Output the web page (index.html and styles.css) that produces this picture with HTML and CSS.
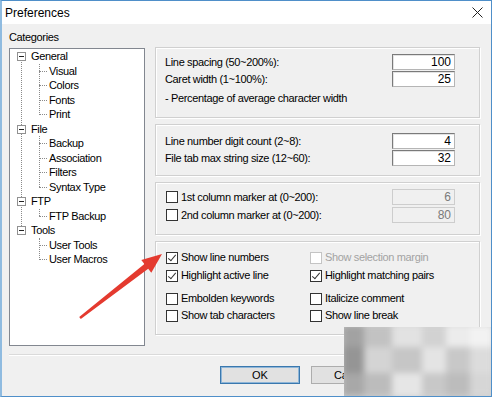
FILE: index.html
```html
<!DOCTYPE html>
<html>
<head>
    <title>Preferences</title>
    <link rel="stylesheet" href="styles.css">
</head>
<body>
    <div class="window">
        <div class="titlebar">
            <span class="title">Preferences</span>
            <svg class="close" width="11" height="11" viewBox="0 0 11 11">
                <path d="M0.5 0.5 L10.5 10.5 M10.5 0.5 L0.5 10.5" stroke="#222" stroke-width="1"/>
            </svg>
        </div>

        <div class="main">
            <div class="left">
                <div class="cat-label">Categories</div>
                <div class="tree-box">
                    <ul class="tree">
                        <li class="node">
                            <div class="row"><span class="exp"></span>General</div>
                            <ul class="kids">
                                <li><div class="row">Visual</div></li>
                                <li><div class="row">Colors</div></li>
                                <li><div class="row">Fonts</div></li>
                                <li><div class="row">Print</div></li>
                            </ul>
                        </li>
                        <li class="node">
                            <div class="row"><span class="exp"></span>File</div>
                            <ul class="kids">
                                <li><div class="row">Backup</div></li>
                                <li><div class="row">Association</div></li>
                                <li><div class="row">Filters</div></li>
                                <li><div class="row">Syntax Type</div></li>
                            </ul>
                        </li>
                        <li class="node">
                            <div class="row"><span class="exp"></span>FTP</div>
                            <ul class="kids">
                                <li><div class="row">FTP Backup</div></li>
                            </ul>
                        </li>
                        <li class="node last">
                            <div class="row"><span class="exp"></span>Tools</div>
                            <ul class="kids">
                                <li><div class="row">User Tools</div></li>
                                <li><div class="row">User Macros</div></li>
                            </ul>
                        </li>
                    </ul>
                </div>
            </div>

            <div class="right">
                <div class="group g1">
                    <div class="field"><span>Line spacing (50~200%):</span><span class="num">100</span></div>
                    <div class="field"><span>Caret width (1~100%):</span><span class="num">25</span></div>
                    <div class="note">- Percentage of average character width</div>
                </div>

                <div class="group g2">
                    <div class="field"><span>Line number digit count (2~8):</span><span class="num">4</span></div>
                    <div class="field"><span>File tab max string size (12~60):</span><span class="num">32</span></div>
                </div>

                <div class="group g3">
                    <div class="field"><span class="cb"></span><span class="cb-text">1st column marker at (0~200):</span><span class="num off">6</span></div>
                    <div class="field"><span class="cb"></span><span class="cb-text">2nd column marker at (0~200):</span><span class="num off">80</span></div>
                </div>

                <div class="group g4">
                    <div class="checks">
                        <label class="chk"><span class="cb on"></span>Show line numbers</label>
                        <label class="chk off"><span class="cb"></span>Show selection margin</label>
                        <label class="chk"><span class="cb on"></span>Highlight active line</label>
                        <label class="chk"><span class="cb on"></span>Highlight matching pairs</label>
                    </div>
                    <div class="checks second">
                        <label class="chk"><span class="cb"></span>Embolden keywords</label>
                        <label class="chk"><span class="cb"></span>Italicize comment</label>
                        <label class="chk"><span class="cb"></span>Show tab characters</label>
                        <label class="chk"><span class="cb"></span>Show line break</label>
                    </div>
                </div>
            </div>
        </div>

        <div class="footer">
            <button class="btn default">OK</button>
            <button class="btn">Cancel</button>
        </div>

        <!-- red pointer drawn on top of the dialog -->
        <svg class="arrow" width="492" height="397" viewBox="0 0 492 397">
            <polygon points="162,254 151.3,272.7 148.2,268.8 80.8,319 79.2,317 144.4,264 141.3,260.1" fill="#e43a2f"/>
        </svg>

        <!-- blurred watermark in the corner -->
        <div class="mosaic">
            <div class="blur">
                <span style="background:#a2a2a2"></span><span style="background:#c2c2c2"></span><span style="background:#e2e2e2"></span><span style="background:#d2d2d2"></span><span style="background:#ececec"></span><span style="background:#f2f2f2"></span>
                <span style="background:#959595"></span><span style="background:#d4d4d4"></span><span style="background:#c6c6c6"></span><span style="background:#e4e4e4"></span><span style="background:#c8c8c8"></span><span style="background:#dcdcdc"></span>
                <span style="background:#a8a8a8"></span><span style="background:#bcbcbc"></span><span style="background:#e6e6e6"></span><span style="background:#c8c8c8"></span><span style="background:#bcbcbc"></span><span style="background:#d6d6d6"></span>
            </div>
        </div>
    </div>
</body>
</html>
```

FILE: styles.css
```css
* { box-sizing: border-box; }
body { margin: 0; background: #f0f0f0; font-family: "Liberation Sans", Arial, sans-serif; font-size: 11px; letter-spacing: -0.35px; color: #000; }

.window { position: relative; width: 492px; height: 397px; background: #f0f0f0; border: 1px solid #4f8fc9; border-left: 2px solid #8fbbe0; overflow: hidden; }

.titlebar { height: 23px; background: #fff; display: flex; align-items: center; justify-content: space-between; padding: 0 8px 0 3px; }
.title { font-size: 12px; letter-spacing: 0; color: #000; }
.close { display: block; }

.main { display: flex; gap: 10px; padding-left: 7px; }
.left { width: 136px; }
.cat-label { margin-top: 7px; line-height: 12px; margin-bottom: 5px; }
.tree-box { height: 298px; background: #fff; border: 1px solid #828790; }

/* tree */
.tree, .kids { list-style: none; margin: 0; padding: 0; }
.tree .row { height: 14.5px; line-height: 14.5px; white-space: nowrap; }
.node { position: relative; }
.node > .row { position: relative; padding-left: 21px; }
.node::before { content: ""; position: absolute; left: 11px; top: 7px; bottom: -7px; border-left: 1px dotted #8a8a8a; }
.node.last::before { display: none; }
.exp { position: absolute; left: 7px; top: 3px; width: 9px; height: 9px; border: 1px solid #919191; background: #fff; z-index: 1; }
.exp::after { content: ""; position: absolute; left: 1px; top: 3px; width: 5px; height: 1px; background: #222; }
.kids { position: relative; }
.kids::before { content: ""; position: absolute; left: 29px; top: 0; bottom: 7px; border-left: 1px dotted #8a8a8a; }
.kids li { position: relative; }
.kids .row { padding-left: 39px; }
.kids li::before { content: ""; position: absolute; left: 29px; top: 7px; width: 8px; border-top: 1px dotted #8a8a8a; }

/* right side groups */
.right { width: 325px; padding-top: 23px; display: flex; flex-direction: column; gap: 6px; }
.group { border: 1px solid #d0d0d0; box-shadow: inset 1px 1px 0 #fff, 1px 1px 0 #fff; }
.g1 { height: 71px; padding-top: 6px; }
.g2 { height: 52px; padding-top: 8px; }
.g3 { height: 53px; padding-top: 6px; }
.g4 { height: 94px; padding-top: 9px; }

.field { display: flex; align-items: center; height: 16px; margin-bottom: 1px; padding-left: 9px; }
.g3 .field { margin-bottom: 2px; padding-left: 10px; }
.num { margin-left: auto; margin-right: 24px; width: 63px; height: 16px; line-height: 14px; font-size: 12px; letter-spacing: 0; text-align: right; padding-right: 3px; background: #fff; border: 1px solid #7a7a7a; border-bottom-color: #b5b5b5; border-right-color: #b5b5b5; box-shadow: inset 1px 1px 0 #e3e3e3; }
.num.off { background: #f0f0f0; border-color: #cdcdcd; box-shadow: none; color: #7a7a7a; }
.note { margin-top: 5px; padding-left: 9px; line-height: 12px; }

.cb { display: inline-block; position: relative; width: 12px; height: 12px; border: 1px solid #333; background: #fff; flex: none; }
.cb.on::after { content: ""; position: absolute; left: 3px; top: 0px; width: 3px; height: 7px; border-right: 1.5px solid #333; border-bottom: 1.5px solid #333; transform: rotate(40deg); }
.cb-text { margin-left: 3px; }

.checks { display: grid; grid-template-columns: 144px 1fr; row-gap: 5px; padding-left: 10px; }
.checks.second { margin-top: 10px; row-gap: 4px; }
.chk { display: flex; align-items: center; gap: 3px; height: 13px; line-height: 13px; }
.chk.off { color: #a3a3a3; }
.chk.off .cb { border-color: #c4c4c4; }

.footer { margin: 8px 0 0 7px; border-top: 1px solid #dadada; box-shadow: inset 0 1px 0 #fff; padding: 11px 0 0 211px; display: flex; gap: 11px; }
.btn { width: 80px; height: 18px; padding: 0; font: inherit; line-height: 16px; color: #000; background: #e1e1e1; border: 1px solid #adadad; }
.btn.default { border-color: #3a78ae; box-shadow: inset 0 0 0 1px #8fb6d8; }

.arrow { position: absolute; left: -2px; top: -1px; pointer-events: none; }

.mosaic { position: absolute; left: 342px; top: 326px; width: 150px; height: 71px; overflow: hidden; background: #d0d0d0; }
.blur { display: grid; grid-template-columns: 22px 28px 30px 24px 24px 23px; grid-template-rows: 22px 26px 23px; filter: blur(3px); margin: -2px; }
```
